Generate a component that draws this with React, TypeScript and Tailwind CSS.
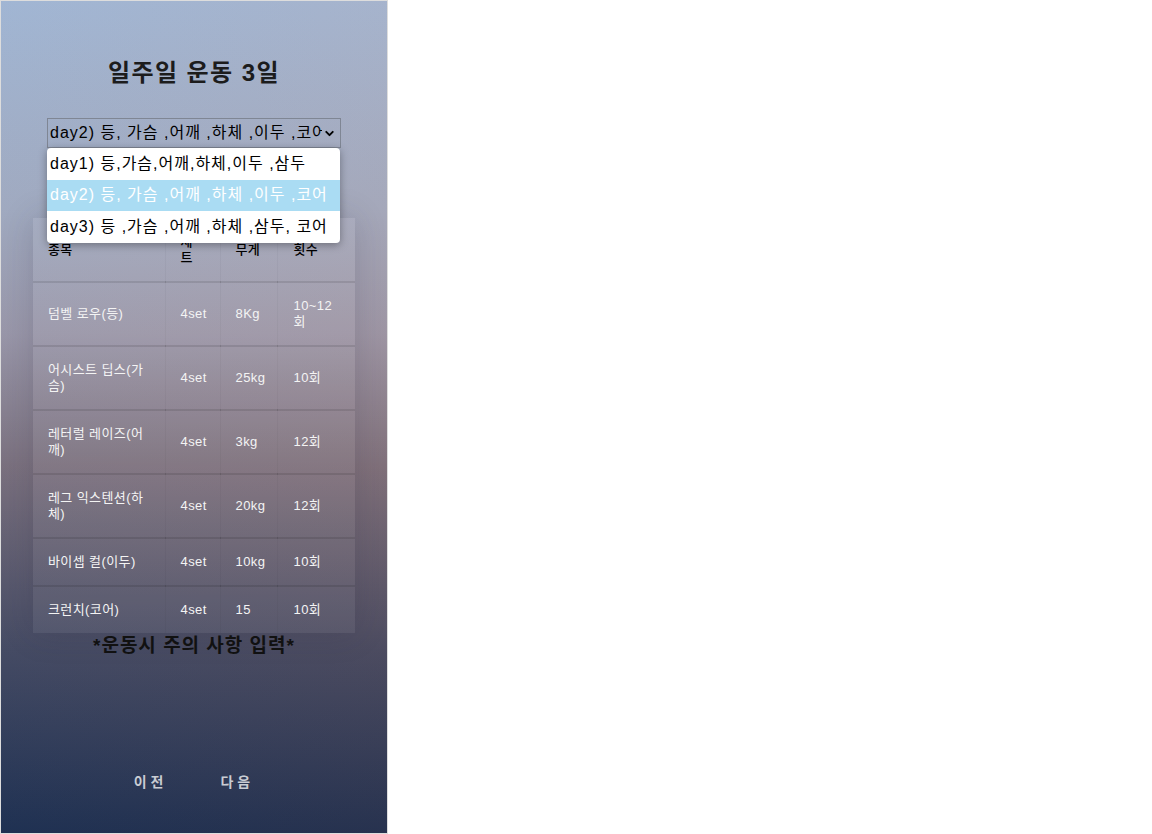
import { ChevronDown } from "lucide-react";

const OPTIONS = [
  "day1) 등,가슴,어깨,하체,이두 ,삼두",
  "day2) 등, 가슴 ,어깨 ,하체 ,이두 ,코어",
  "day3) 등 ,가슴 ,어깨 ,하체 ,삼두, 코어",
];

const ROWS = [
  { name: "덤벨 로우(등)", set: "4set", weight: "8Kg", reps: "10~12회" },
  { name: "어시스트 딥스(가슴)", set: "4set", weight: "25kg", reps: "10회" },
  { name: "레터럴 레이즈(어깨)", set: "4set", weight: "3kg", reps: "12회" },
  { name: "레그 익스텐션(하체)", set: "4set", weight: "20kg", reps: "12회" },
  { name: "바이셉 컬(이두)", set: "4set", weight: "10kg", reps: "10회" },
  { name: "크런치(코어)", set: "4set", weight: "15", reps: "10회" },
];

export default function App() {
  return (
    <div className="min-h-screen bg-white font-['Liberation_Sans','Noto_Sans_CJK_KR',sans-serif]">
      <div className="w-[388px] h-[834px] border border-[#dddddd] flex flex-col items-center bg-[linear-gradient(to_right,rgba(40,60,110,0.08),rgba(120,70,70,0.1)),linear-gradient(to_bottom,#abc0dc_0%,#aab3c7_25%,#a29eae_40%,#817580_56%,#474c63_78%,#1e3050_100%)]">
        <h2 className="mt-[56px] text-[24px] leading-[32px] font-bold tracking-[1.4px] text-[#1c1c1c]">일주일 운동 3일</h2>

        <div className="relative mt-[29px] w-[294px]">
          <div className="h-[30px] border border-[#7f8694] flex items-center pl-[2px] pr-[4px] gap-[1px]">
            <span className="flex-1 overflow-hidden whitespace-nowrap text-[16px] leading-[20px] tracking-[1px] text-black">{OPTIONS[1]}</span>
            <ChevronDown className="w-[13px] h-[13px] text-black shrink-0" strokeWidth={3.5} />
          </div>
          <ul className="absolute left-0 top-[30px] w-[293px] bg-white rounded-[4px] shadow-[0_2px_8px_rgba(0,0,0,0.35)] overflow-hidden z-10">
            {OPTIONS.map((opt, i) => (
              <li
                key={opt}
                className={`h-[31.5px] flex items-center pl-[3px] text-[16px] leading-[20px] tracking-[1px] whitespace-nowrap ${i === 1 ? "bg-[#aadcf3] text-white" : "text-black"}`}
              >
                {opt}
              </li>
            ))}
          </ul>
        </div>

        <table className="mt-[70px] w-[322px] table-fixed border-collapse bg-white/5 shadow-[0_0_30px_rgba(40,40,60,0.18)] text-[13px] leading-[16px] tracking-[0.4px]">
          <colgroup>
            <col className="w-[132px]" />
            <col className="w-[55px]" />
            <col className="w-[57px]" />
            <col className="w-[78px]" />
          </colgroup>
          <thead>
            <tr className="h-[64px] border-b-2 border-black/10 text-black">
              <th className="px-[15px] py-[15px] text-left font-medium border-r border-black/[0.03]">종목</th>
              <th className="px-[15px] py-[15px] text-left font-medium border-r border-black/[0.03]">세<br />트</th>
              <th className="px-[15px] py-[15px] text-left font-medium border-r border-black/[0.03]">무게</th>
              <th className="px-[16px] py-[15px] text-left font-medium">횟수</th>
            </tr>
          </thead>
          <tbody>
            {ROWS.map((r) => (
              <tr key={r.name} className="border-b-2 border-black/10 text-[#f4f4f4] last:border-b-0">
                <td className="px-[15px] py-[15px] border-r border-black/[0.03] align-middle">{r.name}</td>
                <td className="px-[15px] py-[15px] border-r border-black/[0.03] align-middle">{r.set}</td>
                <td className="px-[15px] py-[15px] border-r border-black/[0.03] align-middle">{r.weight}</td>
                <td className="px-[16px] py-[15px] align-middle">{r.reps}</td>
              </tr>
            ))}
          </tbody>
        </table>

        <h3 className="mt-[1px] text-[19px] leading-[24px] font-bold tracking-[1px] text-[#111111]">*운동시 주의 사항 입력*</h3>

        <div className="mt-[115px] flex gap-[57px] -translate-x-[2px]">
          <button className="text-[14px] leading-[18px] font-bold text-[#c9ccd3]">이 전</button>
          <button className="text-[14px] leading-[18px] font-bold text-[#c9ccd3]">다 음</button>
        </div>
      </div>
    </div>
  );
}
